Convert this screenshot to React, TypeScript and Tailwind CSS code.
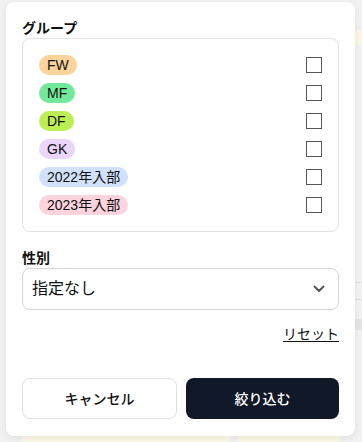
const groups = [
  { label: 'FW', color: 'bg-[#fcd49b]' },
  { label: 'MF', color: 'bg-[#72e99a]' },
  { label: 'DF', color: 'bg-[#bdef55]' },
  { label: 'GK', color: 'bg-[#ebd5fb]' },
  { label: '2022年入部', color: 'bg-[#d2e1fb]' },
  { label: '2023年入部', color: 'bg-[#fdd3dd]' },
];

function Background() {
  return (
    <div className="h-[442px] w-[362px] bg-[#f2f2f2] overflow-hidden">
      <div className="h-[30px]" />
      <div className="ml-auto h-[15px] w-[20px] bg-[#fbf7e4]" />
      <div className="h-[237px]" />
      <div className="ml-auto h-px w-[20px] bg-[#e2e2e2]" />
      <div className="h-[16px]" />
      <div className="ml-auto h-px w-[20px] bg-[#e2e2e2]" />
      <div className="h-[19px]" />
      <div className="ml-auto h-[11px] w-[20px] bg-[#e6e6e6]" />
      <div className="h-[105px]" />
      <div className="flex gap-2 px-[22px]">
        <div className="h-[10px] w-[208px] bg-[#fbf8e6]" />
        <div className="h-[10px] flex-1 bg-[#fbf8e6]" />
      </div>
    </div>
  );
}

function Checkbox() {
  return <div className="size-4 border border-[#555] bg-white" />;
}

export default function App() {
  return (
    <div
      className="relative h-[442px] w-[362px] overflow-hidden text-[#111]"
      style={{ fontFamily: '"Liberation Sans", "Noto Sans CJK JP", sans-serif' }}
    >
      <Background />

      {/* filter popover */}
      <div className="absolute left-[6px] top-[2px] w-[349px] rounded-lg bg-white px-4 pt-4 pb-[17px] shadow-[0_2px_8px_rgba(0,0,0,0.08)]">
        <div className="text-sm font-bold leading-5">グループ</div>
        <div className="flex flex-col gap-2 rounded-lg border border-[#e3e3e3] p-4">
          {groups.map((g) => (
            <div key={g.label} className="flex items-center justify-between">
              <span className={`rounded-full px-2 text-sm leading-5 ${g.color}`}>{g.label}</span>
              <Checkbox />
            </div>
          ))}
        </div>

        <div className="mt-4 text-sm font-bold leading-5">性別</div>
        <div className="flex h-[42px] items-center justify-between rounded-lg border border-[#d6d6d6] pl-[9px] pr-[13px]">
          <span className="text-base">指定なし</span>
          <svg width="12" height="8" viewBox="0 0 12 8" fill="none">
            <path d="M1.5 1.5 6 6l4.5-4.5" stroke="#555" strokeWidth="2" strokeLinecap="round" strokeLinejoin="round" />
          </svg>
        </div>

        <div className="mt-3.5 flex justify-end">
          <span className="text-sm leading-5 underline underline-offset-2">リセット</span>
        </div>

        <div className="mt-[34px] flex gap-[9px]">
          <button className="h-[41px] flex-1 rounded-lg border border-[#e0e0e0] bg-white text-sm font-medium">
            キャンセル
          </button>
          <button className="h-[41px] flex-1 rounded-lg bg-[#111827] text-sm font-medium text-white">
            絞り込む
          </button>
        </div>
      </div>
    </div>
  );
}
